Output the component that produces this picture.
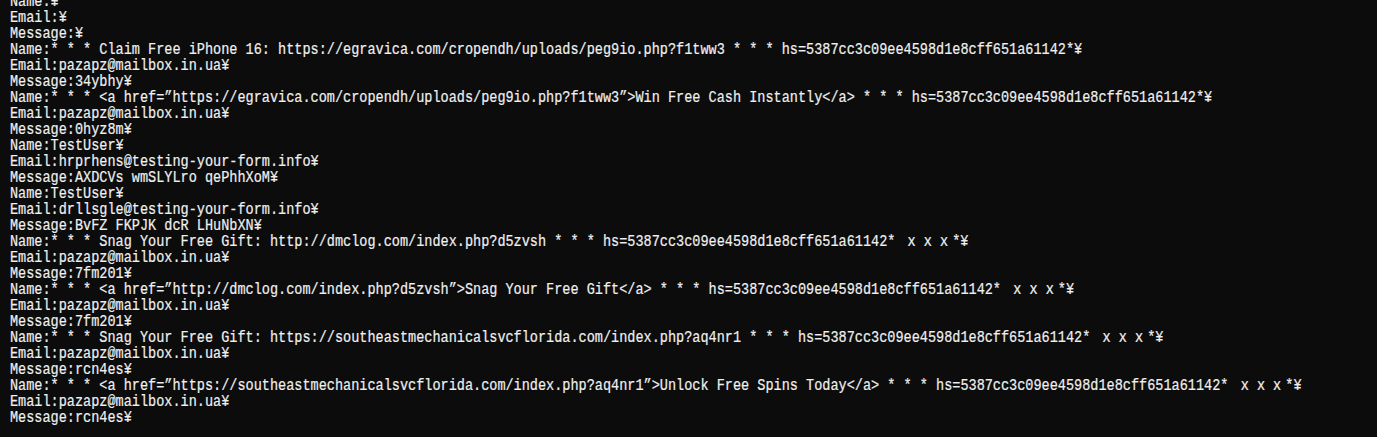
const hash = "hs=5387cc3c09ee4598d1e8cff651a61142"
const email = "Email:pazapz@mailbox.in.ua¥"

const lines = [
  "Name:¥",
  "Email:¥",
  "Message:¥",
  `Name:* * * Claim Free iPhone 16: https://egravica.com/cropendh/uploads/peg9io.php?f1tww3 * * * ${hash}*¥`,
  email,
  "Message:34ybhy¥",
  `Name:* * * <a href=”https://egravica.com/cropendh/uploads/peg9io.php?f1tww3”>Win Free Cash Instantly</a> * * * ${hash}*¥`,
  email,
  "Message:0hyz8m¥",
  "Name:TestUser¥",
  "Email:hrprhens@testing-your-form.info¥",
  "Message:AXDCVs wmSLYLro qePhhXoM¥",
  "Name:TestUser¥",
  "Email:drllsgle@testing-your-form.info¥",
  "Message:BvFZ FKPJK dcR LHuNbXN¥",
  `Name:* * * Snag Your Free Gift: http://dmclog.com/index.php?d5zvsh * * * ${hash}* ｘｘｘ*¥`,
  email,
  "Message:7fm201¥",
  `Name:* * * <a href=”http://dmclog.com/index.php?d5zvsh”>Snag Your Free Gift</a> * * * ${hash}* ｘｘｘ*¥`,
  email,
  "Message:7fm201¥",
  `Name:* * * Snag Your Free Gift: https://southeastmechanicalsvcflorida.com/index.php?aq4nr1 * * * ${hash}* ｘｘｘ*¥`,
  email,
  "Message:rcn4es¥",
  `Name:* * * <a href=”https://southeastmechanicalsvcflorida.com/index.php?aq4nr1”>Unlock Free Spins Today</a> * * * ${hash}* ｘｘｘ*¥`,
  email,
  "Message:rcn4es¥"
]

// full-width chars take two cells
function Line({ text }) {
  const parts = text.split(/(ｘ)/)
  return (
    <div className="h-[16px]">
      {parts.map((p, i) =>
        p === "ｘ" ? (
          <span key={i} className="inline-block w-[19.2px] text-center">{p}</span>
        ) : (
          <span key={i}>{p}</span>
        )
      )}
    </div>
  )
}

export default function App() {
  return (
    <div className="h-[437px] w-full overflow-hidden bg-[#0c0c0c]">
      <div className="-mt-[6px] pl-[10px]">
        <div className="origin-top-left scale-x-[0.846] whitespace-pre font-['Liberation_Mono','Noto_Sans_CJK_JP',monospace] text-[16px] leading-[16px] text-[#f0f0f0] [-webkit-text-stroke:0.2px_#f0f0f0]">
          {lines.map((l, i) => (
            <Line key={i} text={l} />
          ))}
        </div>
      </div>
    </div>
  )
}
